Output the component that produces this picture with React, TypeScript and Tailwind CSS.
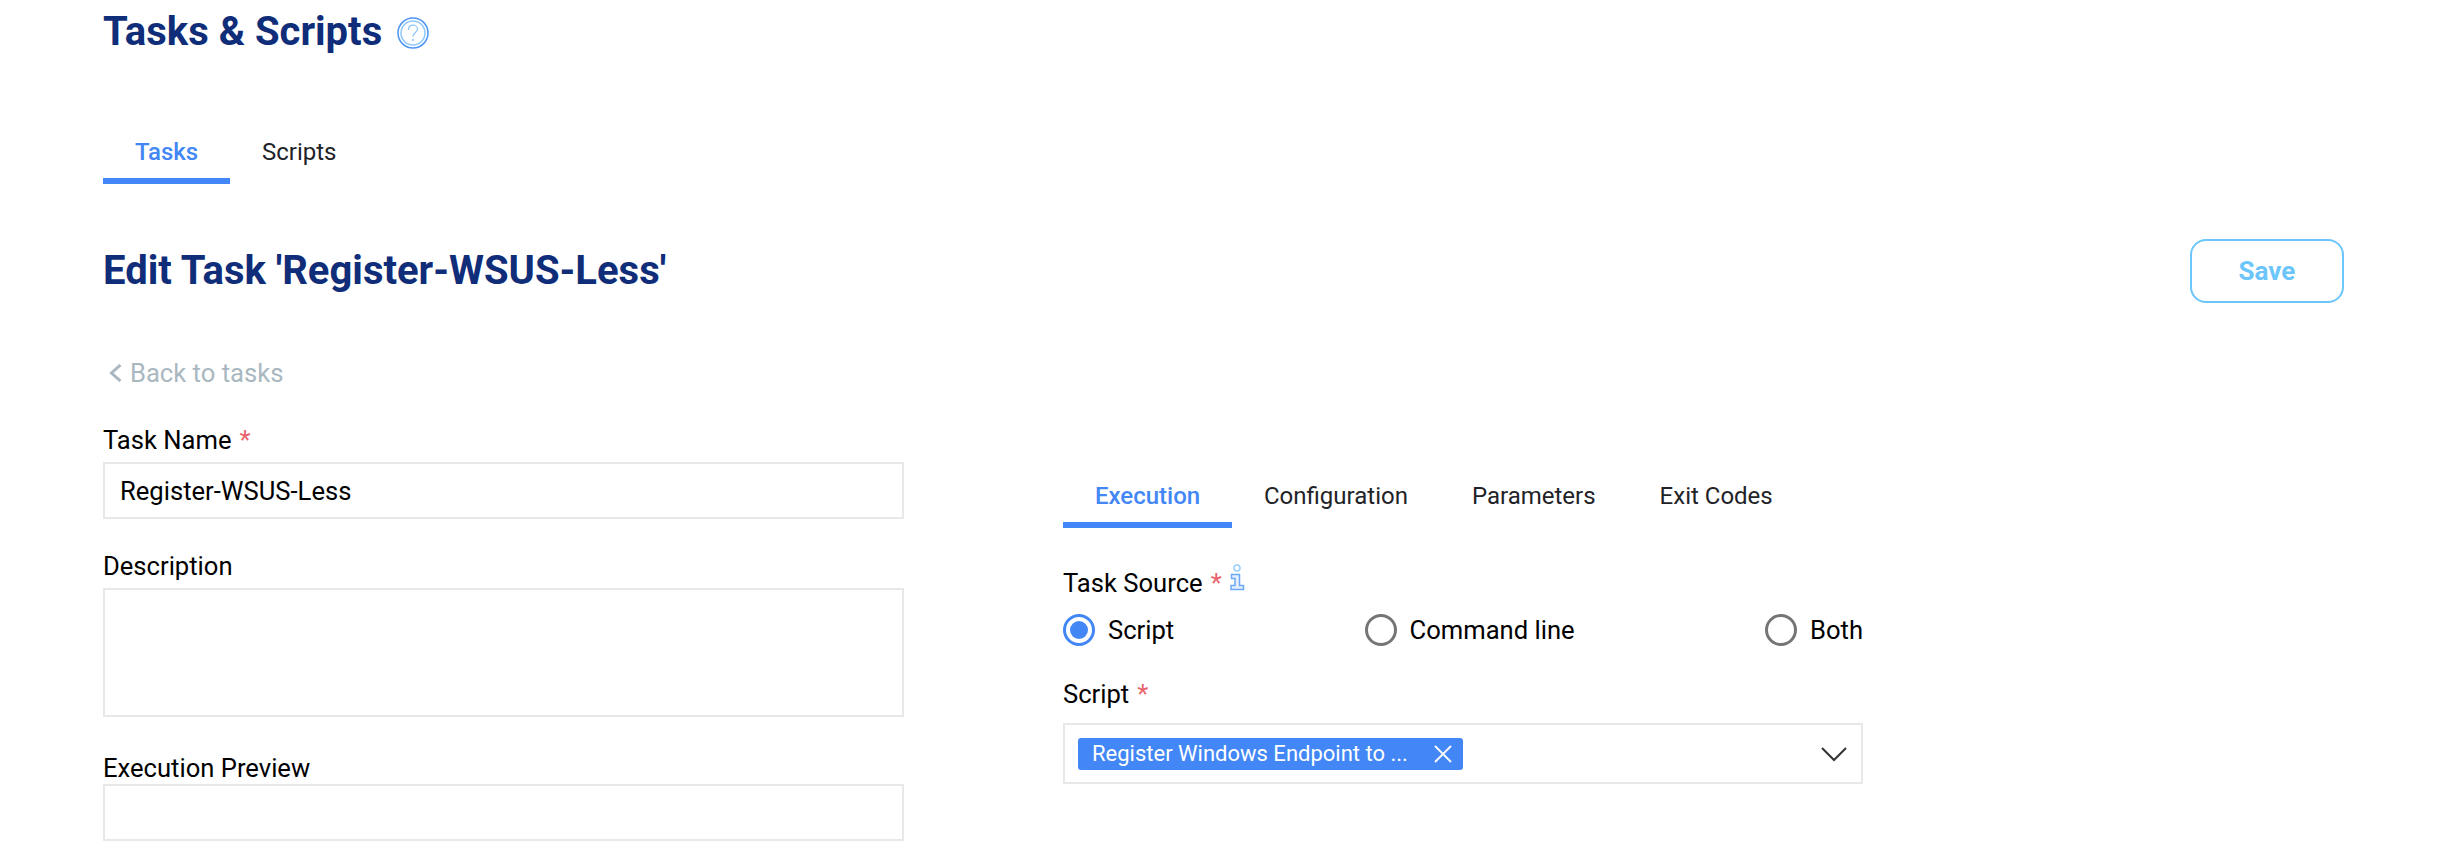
import React from 'react';

function Req() {
  return <span className="text-[#e8636b] ml-2">*</span>;
}

function HelpIcon() {
  return (
    <svg width="32" height="32" viewBox="0 0 32 32" fill="none" className="ml-[15px] mt-[2px]">
      <circle cx="16" cy="16" r="15" stroke="#4d94f5" strokeWidth="1.500" />
      <circle cx="16" cy="16" r="12" stroke="#8cc8fb" strokeWidth="1.500" />
      <path d="M11.500 12.500c0-2.600 2-4.300 4.500-4.300s4.500 1.700 4.500 4c0 3.300-4.500 3.300-4.500 7" stroke="#8cc8fb" strokeWidth="1.200" strokeLinecap="round" />
      <circle cx="16" cy="23" r="1.100" fill="#8cc8fb" />
    </svg>
  );
}

function InfoIcon() {
  return (
    <svg width="15" height="27" viewBox="0 0 15 27" fill="none" className="ml-[8px] mb-[11px]">
      <circle cx="7" cy="4" r="3" stroke="#9ccffb" strokeWidth="1.600" />
      <path d="M1.500 10.500h8v11h4v4H1v-4h4v-7H1.500z" fill="#e3effd" stroke="#6fa8f5" strokeWidth="1.500" />
    </svg>
  );
}

function Radio({ label, checked }: { label: string; checked?: boolean }) {
  return (
    <label className="flex items-center h-8">
      <span
        className={
          checked
            ? 'w-8 h-8 rounded-full border-[3px] border-[#4287f5] flex items-center justify-center'
            : 'w-8 h-8 rounded-full border-[3px] border-[#757575]'
        }
      >
        {checked && <span className="w-[18px] h-[18px] rounded-full bg-[#4287f5]" />}
      </span>
      <span className="ml-[13px] text-black">{label}</span>
    </label>
  );
}

export default function App() {
  return (
    <div className="bg-white h-[866px] overflow-hidden pl-[103px] pr-[112px] font-['Roboto',sans-serif] text-[25.6px] leading-[28px]">
      <div className="flex items-center h-[64px]">
        <h1 className="text-[40px] leading-[64px] font-bold text-[#0f2d78]">Tasks &amp; Scripts</h1>
        <HelpIcon />
      </div>

      <div className="flex mt-[66px] h-[54px] text-[24px]">
        <div className="w-[127px] h-[54px] border-b-[6px] border-[#4287f5] text-[#4287f5] font-medium flex justify-center pt-2">
          Tasks
        </div>
        <div className="ml-[32px] text-[#1f2328] pt-2">Scripts</div>
      </div>

      <div className="flex justify-between items-center mt-[55px]">
        <h2 className="text-[40px] leading-[64px] font-bold text-[#0f2d78]">Edit Task 'Register-WSUS-Less'</h2>
        <button className="w-[154px] h-[64px] rounded-[16px] border-2 border-[#6cc5fb] text-[#6cc5fb] text-[26px] font-bold">
          Save
        </button>
      </div>

      <div className="flex items-center mt-[51px] text-[#a9b8c0] h-[38px]">
        <svg width="13" height="18" viewBox="0 0 13 18" fill="none" className="ml-[6px] mr-[8px]">
          <path d="M11.500 1L2.500 9l9 8" stroke="#a9b8c0" strokeWidth="3" />
        </svg>
        <span>Back to tasks</span>
      </div>

      <div className="flex mt-[29px]">
        <div className="w-[801px]">
          <div className="text-black h-[41px] leading-[38px]">
            Task Name<Req />
          </div>
          <div className="h-[57px] border-2 border-[#e8e8e8] flex items-center px-[15px] text-black">Register-WSUS-Less</div>
          <div className="text-black mt-[27px] h-[42px] leading-[40px]">Description</div>
          <div className="h-[129px] border-2 border-[#e8e8e8]" />
          <div className="text-black mt-[35px] h-[32px] leading-[32px]">Execution Preview</div>
          <div className="h-[57px] border-2 border-[#e8e8e8]" />
        </div>

        <div className="w-[800px] ml-[159px] pt-[52px]">
          <div className="flex text-[24px]">
            <div className="w-[169px] h-[55px] border-b-[6px] border-[#4287f5] text-[#4287f5] font-medium flex justify-center pt-[9px]">
              Execution
            </div>
            <div className="ml-[32px] text-[#1f2328] pt-[9px]">Configuration</div>
            <div className="ml-[64px] text-[#1f2328] pt-[9px]">Parameters</div>
            <div className="ml-[64px] text-[#1f2328] pt-[9px]">Exit Codes</div>
          </div>
          <div className="flex items-center mt-[39px] text-black h-[32px]">
            Task Source<Req />
            <InfoIcon />
          </div>
          <div className="flex justify-between mt-[15px]">
            <Radio label="Script" checked />
            <Radio label="Command line" />
            <Radio label="Both" />
          </div>
          <div className="text-black mt-[32px] h-[32px] leading-[32px]">
            Script<Req />
          </div>
          <div className="mt-[13px] h-[61px] border-2 border-[#e8e8e8] flex items-center justify-between pl-[13px] pr-[14px]">
            <span className="w-[385px] h-[32px] bg-[#4287f5] rounded-[3px] text-white text-[22px] leading-[32px] flex items-center pl-[14px]">
              <span className="flex-1">Register Windows Endpoint to ...</span>
              <svg width="18" height="18" viewBox="0 0 18 18" fill="none" className="mr-[11px]">
                <path d="M1 1l16 16M17 1L1 17" stroke="#fff" strokeWidth="1.800" />
              </svg>
            </span>
            <svg width="26" height="16" viewBox="0 0 26 16" fill="none">
              <path d="M1 2l12 12L25 2" stroke="#333" strokeWidth="2" />
            </svg>
          </div>
        </div>
      </div>
    </div>
  );
}
